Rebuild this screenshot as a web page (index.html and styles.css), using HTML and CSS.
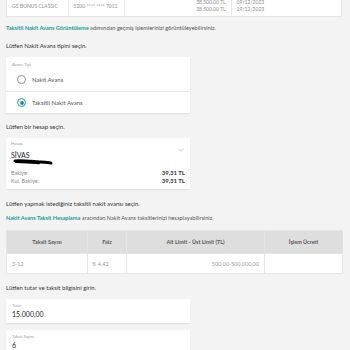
FILE: index.html
```html
<!DOCTYPE html>
<html lang="tr">
<head>
<meta charset="utf-8">
<link rel="stylesheet" href="styles.css">
</head>
<body>
<div class="page">
  <div class="summary-card">
    <table class="summary">
      <colgroup><col class="c1"><col class="c2"><col class="c3"><col class="c4"></colgroup>
      <tr>
        <td>GS BONUS CLASSIC</td>
        <td>5200 **** **** 7011</td>
        <td class="num">38.500,00 TL<br>38.500,00 TL</td>
        <td>09/12/2023<br>19/12/2023</td>
      </tr>
    </table>
  </div>

  <p class="info"><a class="link">Taksitli Nakit Avans Görüntüleme</a> adımından geçmiş işlemlerinizi görüntüleyebilirsiniz.</p>

  <p class="title t1">Lütfen Nakit Avans tipini seçin.</p>
  <div class="card radio-card">
    <div class="field-label">Avans Tipi</div>
    <div class="radio-row first"><span class="radio"></span><span>Nakit Avans</span></div>
    <div class="radio-row second"><span class="radio on"></span><span>Taksitli Nakit Avans</span></div>
  </div>

  <p class="title t2">Lütfen bir hesap seçin.</p>
  <div class="card account-card">
    <div class="acc-head">
      <div class="acc-names">
        <div class="field-label">Hesap</div>
        <div class="acc-name">SİVAS</div>
      </div>
      <svg class="chev" width="6" height="4" viewBox="0 0 6 4"><path d="M0.5 0.8 L3 3.2 L5.5 0.8" fill="none" stroke="#b5b5b5" stroke-width="0.7"/></svg>
    </div>
    <svg class="scribble" width="46" height="7" viewBox="0 0 46 7"><path d="M2 2.2 C10 1.6 20 2.6 28 3.2 C35 3.8 41 4.2 44 4.8" fill="none" stroke="#000" stroke-width="3.4" stroke-linecap="round"/><path d="M3 3.6 C12 3.8 22 4.6 30 5" fill="none" stroke="#000" stroke-width="2.2" stroke-linecap="round"/></svg>
    <div class="bal-row b1"><span>Bakiye:</span><b>39,31 TL</b></div>
    <div class="bal-row"><span>Kul. Bakiye:</span><b>39,31 TL</b></div>
  </div>

  <p class="title t3">Lütfen yapmak istediğiniz taksitli nakit avansı seçin.</p>
  <p class="info i2"><a class="link">Nakit Avans Taksit Hesaplama</a> aracından Nakit Avans taksitlerinizi hesaplayabilirsiniz.</p>

  <table class="rates">
    <colgroup><col class="r1"><col class="r2"><col class="r3"><col class="r4"></colgroup>
    <thead>
      <tr><th>Taksit Sayısı</th><th>Faiz</th><th>Alt Limit - Üst Limit (TL)</th><th>İşlem Ücreti</th></tr>
    </thead>
    <tbody>
      <tr><td>3-12</td><td>% 4,42</td><td class="num">500,00-500.000,00</td><td></td></tr>
    </tbody>
  </table>

  <p class="title t4">Lütfen tutar ve taksit bilgisini girin.</p>
  <div class="card input-card">
    <div class="field-label">Tutar</div>
    <div class="input-val">15.000,00</div>
  </div>
  <div class="card input-card second-input">
    <div class="field-label">Taksit Sayısı</div>
    <div class="input-val">6</div>
  </div>
</div>
</body>
</html>
```

FILE: styles.css
```css
html, body {
  margin: 0;
  background: #f3f3f3;
  font-family: Lato, "Noto Sans", sans-serif;
  color: #333;
  overflow: hidden;
}
.page {
  padding: 0 8px 0 6px;
}
.summary-card {
  margin-top: -5px;
  background: #fff;
  border: 1px solid #e6e6e6;
  width: 334px;
}
.summary {
  border-collapse: collapse;
  table-layout: fixed;
  width: 100%;
  font-size: 5px;
  line-height: 7px;
  color: #8c8c8c;
}
.summary .c1 { width: 61px; }
.summary .c2 { width: 56px; }
.summary .c3 { width: 107px; }
.summary td {
  padding: 3px 5px;
  vertical-align: middle;
  white-space: nowrap;
}
.summary td + td { border-left: 1px solid #e8e8e8; }
.summary td.num { text-align: right; }

.info, .title {
  margin: 0;
  font-size: 6px;
  line-height: 8px;
  white-space: nowrap;
}
.info { margin-top: 7px; color: #555; font-size: 5.6px; }
.link { color: #1b9a9c; font-weight: 700; }
.title { color: #333; }
.t1 { margin-top: 10px; }
.t2 { margin-top: 10px; }
.t3 { margin-top: 11px; }
.info.i2 { margin-top: 6px; }
.t4 { margin-top: 10px; }

.card {
  background: #fff;
  width: 184px;
  box-shadow: 0 1px 1.5px rgba(0, 0, 0, 0.09);
  border-radius: 1px;
}
.field-label {
  font-size: 4.2px;
  line-height: 6px;
  color: #9a9a9a;
}

.radio-card { margin-top: 7px; padding-top: 5px; }
.radio-card > .field-label { padding-left: 6px; }
.radio-row {
  display: flex;
  align-items: center;
  padding-left: 11px;
  font-size: 6px;
  color: #555;
}
.radio-row.first { height: 23px; border-bottom: 1px solid #e6e6e6; }
.radio-row.second { height: 21px; }
.radio {
  width: 9px;
  height: 9px;
  box-sizing: border-box;
  border: 1px solid #8f8f8f;
  border-radius: 50%;
  margin-right: 6px;
  display: flex;
  align-items: center;
  justify-content: center;
}
.radio.on { border-color: #1b9a9c; }
.radio.on::after {
  content: "";
  width: 4px;
  height: 4px;
  border-radius: 50%;
  background: #1b9a9c;
}

.account-card {
  margin-top: 7px;
  padding: 3px 5px 4px 5px;
  width: 174px;
}
.acc-head {
  display: flex;
  align-items: center;
  justify-content: space-between;
}
.acc-name {
  margin-top: 4px;
  font-size: 7px;
  line-height: 8px;
  color: #222;
}
.chev { margin-right: 1px; }
.scribble { display: block; height: 6px; margin-left: -1px; }
.bal-row {
  display: flex;
  justify-content: space-between;
  font-size: 5.5px;
  line-height: 8px;
  color: #8a8a8a;
}
.bal-row b { color: #333; font-size: 6px; }
.bal-row.b1 { margin-top: 4px; }

.rates {
  margin-top: 8px;
  width: 336px;
  border-collapse: collapse;
  table-layout: fixed;
  font-size: 5.5px;
}
.rates .r1 { width: 81px; }
.rates .r2 { width: 39px; }
.rates .r3 { width: 138px; }
.rates .r4 { width: 78px; }
.rates th {
  height: 22px;
  padding: 0;
  background: #dedede;
  color: #5a5a5a;
  font-weight: 700;
  border: 1px solid #e4e4e4;
}
.rates th + th { border-left: 1px solid #ececec; }
.rates td {
  height: 19px;
  padding: 0 5px;
  background: #fff;
  color: #9a9a9a;
  border: 1px solid #e6e6e6;
}
.rates td:nth-child(2) { padding-left: 4px; }
.rates td.num { text-align: right; }

.input-card {
  margin-top: 7px;
  padding: 4px 5px 4px 6px;
  width: 173px;
}
.input-val {
  margin-top: 1px;
  font-size: 7px;
  line-height: 9px;
  color: #222;
}
```
